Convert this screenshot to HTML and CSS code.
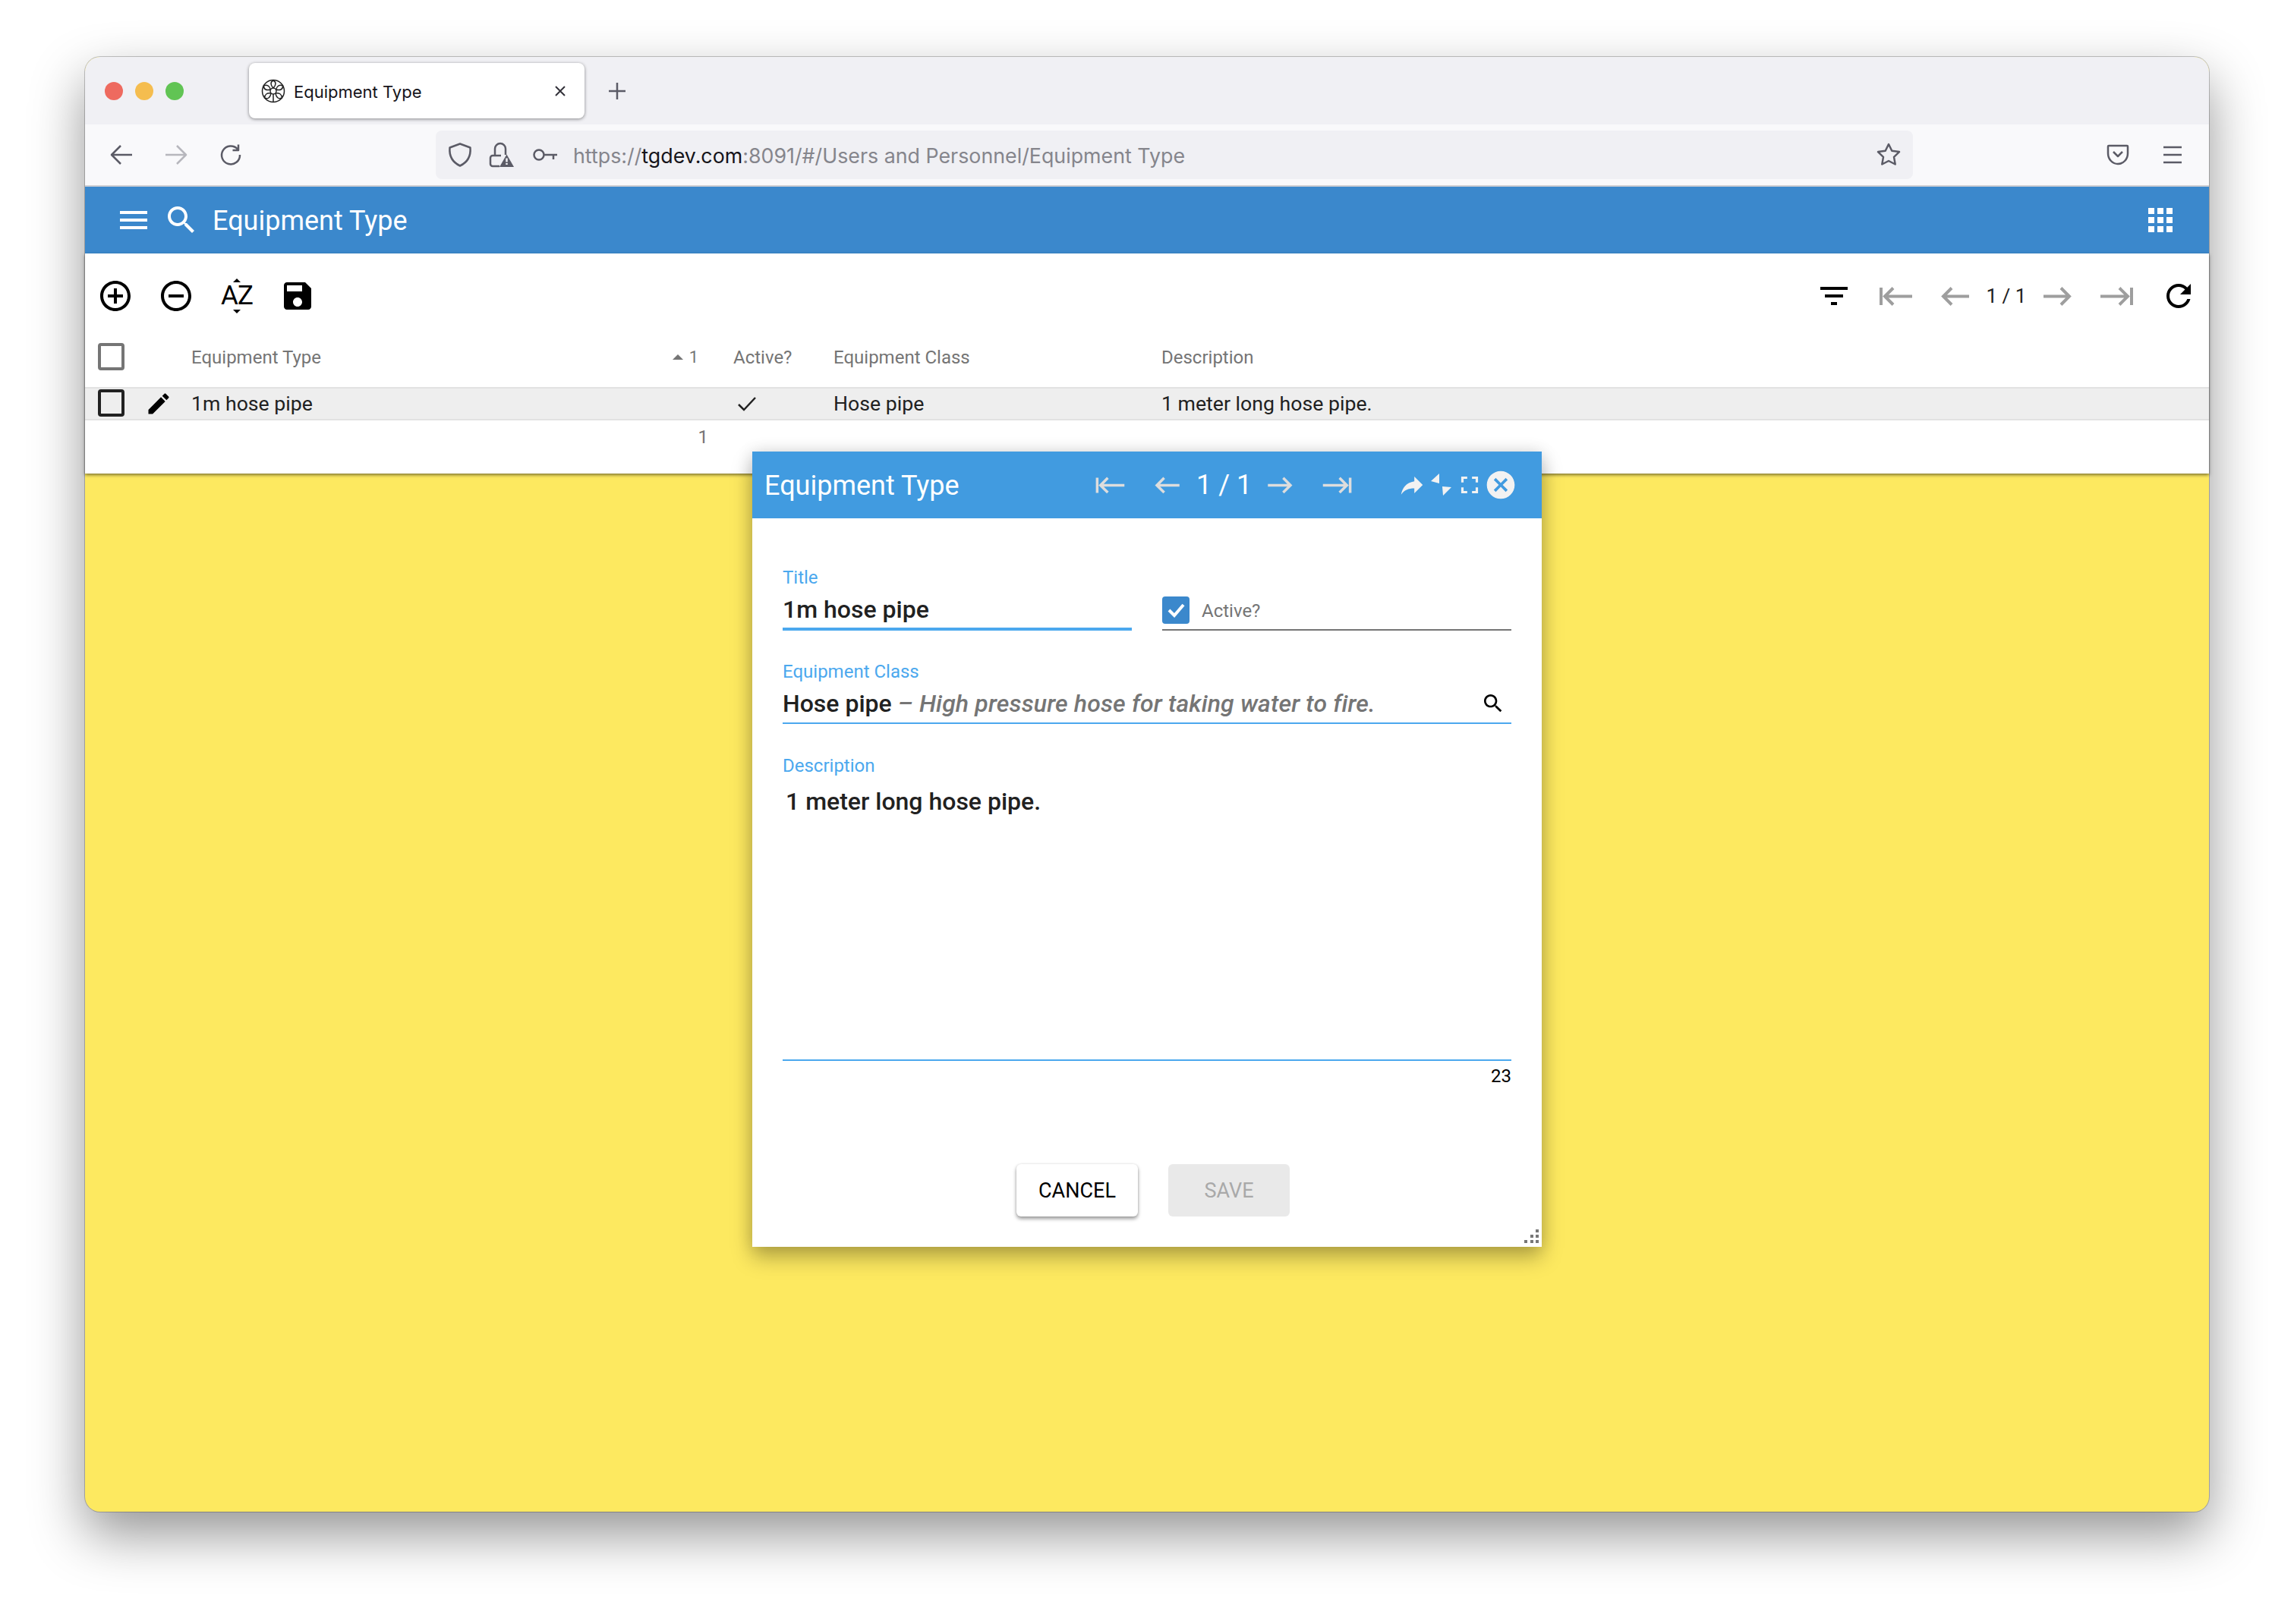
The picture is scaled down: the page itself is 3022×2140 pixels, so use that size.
FILE: index.html
```html
<!DOCTYPE html>
<html lang="en">

<head>
    <meta charset="UTF-8">
    <meta name="viewport" content="width=device-width, initial-scale=1.0">
    <title>Equipment Type</title>
    <link rel="stylesheet" href="styles.css">
</head>

<body>
    <svg class="sprite" aria-hidden="true">
        <symbol id="nav-first" viewBox="0 0 48 32"><path d="M5 5v23M46 16.500H10M21 5.500 10 16.500 21 27.500" /></symbol>
        <symbol id="nav-prev" viewBox="0 0 48 32"><path d="M42 16.500H8M19 5.500 8 16.500 19 27.500" /></symbol>
        <symbol id="nav-next" viewBox="0 0 48 32"><path d="M6 16.500H40M29 5.500 40 16.500 29 27.500" /></symbol>
        <symbol id="nav-last" viewBox="0 0 48 32"><path d="M43 5v23M2 16.500H38M27 5.500 38 16.500 27 27.500" /></symbol>
        <symbol id="search" viewBox="0 0 24 24"><path d="M15.500 14h-.79l-.28-.27C15.410 12.590 16 11.110 16 9.500 16 5.910 13.090 3 9.500 3S3 5.910 3 9.500 5.910 16 9.500 16c1.610 0 3.090-.59 4.230-1.570l.27.28v.79l5 4.990L20.490 19l-4.990-5zm-6 0C7.010 14 5 11.990 5 9.500S7.010 5 9.500 5 14 7.010 14 9.500 11.990 14 9.500 14z" /></symbol>
    </svg>

    <div class="window">
        <div class="tab-strip">
            <div class="lights">
                <span class="light red"></span>
                <span class="light yellow"></span>
                <span class="light green"></span>
            </div>
            <div class="tab">
                <svg class="favicon" viewBox="0 0 32 32">
                    <circle cx="16" cy="16" r="14.500" />
                    <circle cx="16" cy="16" r="4" />
                    <path d="M16 12C12 8 12 4 16 2c4 2 4 6 0 10zM19.500 14c1.500-5 5-7 9-5 .5 4.500-3 6.500-9 5zM19 19c5-1 8 1 8.500 6-4 2-7.500 0-8.500-6zM13 19c-1 6-4.500 8-8.500 6C5 20 8 18 13 19zM12.500 14c-6 1.500-9.500-.5-9-5 4-2 7.500 0 9 5zM16 20v10" />
                </svg>
                <span class="tab-title">Equipment Type</span>
                <svg class="tab-close" viewBox="0 0 20 20"><path d="M4 4l12 12M16 4 4 16" /></svg>
            </div>
            <svg class="new-tab" viewBox="0 0 32 32"><path d="M16 5v22M5 16h22" /></svg>
        </div>

        <div class="nav-bar">
            <svg class="tb-icon" viewBox="0 0 32 32"><path d="M30 16H3M15 4 3 16l12 12" /></svg>
            <svg class="tb-icon disabled" viewBox="0 0 32 32"><path d="M2 16h27M17 4l12 12-12 12" /></svg>
            <svg class="tb-icon" viewBox="0 0 32 32"><path d="M25 8.500A12 12 0 1 0 28 16M26 2.500v7.500h-7.500" /></svg>
            <div class="url-bar">
                <svg class="tb-icon" viewBox="0 0 32 32"><path d="M16 1.500 29.500 6.500c1 11-3 19-13.500 24C5.500 25.500 1.500 17.500 2.500 6.500z" /></svg>
                <svg class="tb-icon lock" viewBox="0 0 32 32">
                    <path d="M8 17V8a7 7 0 0 1 14 0v8M14 31H5a3 3 0 0 1-3-3v-8a3 3 0 0 1 3-3h11" />
                    <path class="solid" d="M23.500 15.500 33 32H14z" />
                    <path class="cutout" d="M23.500 20.500v5M23.500 27v2" />
                </svg>
                <svg class="key" viewBox="0 0 32 32"><circle cx="8" cy="16" r="6.500" /><path d="M15 16h17M27 16v6" /></svg>
                <span class="url"><span class="dim">https://</span>tgdev.com<span class="dim">:8091/#/Users and Personnel/Equipment Type</span></span>
                <svg class="tb-icon star" viewBox="0 0 32 32"><path d="M16 2l4.300 8.700 9.700 1.400-7 6.800 1.700 9.600-8.700-4.500-8.700 4.500 1.700-9.600-7-6.800 9.700-1.400z" /></svg>
            </div>
            <svg class="tb-icon" viewBox="0 0 32 32"><path d="M4 4h24a1 1 0 0 1 1 1v9c0 8-6 14-13 14S3 22 3 14V5a1 1 0 0 1 1-1zM10 12l6 6 6-6" /></svg>
            <svg class="tb-icon" viewBox="0 0 32 32"><path d="M4 6h24M4 16h24M4 26h24" /></svg>
        </div>

        <div class="app-bar">
            <svg class="icon-48" viewBox="0 0 24 24"><path d="M3 18h18v-2H3v2zm0-5h18v-2H3v2zm0-7v2h18V6H3z" /></svg>
            <svg class="icon-48" viewBox="0 0 24 24"><use href="#search" /></svg>
            <h1 class="app-title">Equipment Type</h1>
            <svg class="icon-48" viewBox="0 0 24 24"><path d="M4 8h4V4H4v4zm6 12h4v-4h-4v4zm-6 0h4v-4H4v4zm0-6h4v-4H4v4zm6 0h4v-4h-4v4zm6-10v4h4V4h-4zm-6 4h4V4h-4v4zm6 6h4v-4h-4v4zm0 6h4v-4h-4v4z" /></svg>
        </div>

        <div class="list-panel">
            <div class="toolbar">
                <div class="tool-group">
                    <svg class="icon-48" viewBox="0 0 24 24"><path d="M13 7h-2v4H7v2h4v4h2v-4h4v-2h-4V7zm-1-5C6.480 2 2 6.480 2 12s4.480 10 10 10 10-4.480 10-10S17.520 2 12 2zm0 18c-4.410 0-8-3.590-8-8s3.590-8 8-8 8 3.590 8 8-3.590 8-8 8z" /></svg>
                    <svg class="icon-48" viewBox="0 0 24 24"><path d="M7 11v2h10v-2H7zm5-9C6.480 2 2 6.480 2 12s4.480 10 10 10 10-4.480 10-10S17.520 2 12 2zm0 18c-4.410 0-8-3.590-8-8s3.590-8 8-8 8 3.590 8 8-3.590 8-8 8z" /></svg>
                    <span class="sort-az">AZ<i class="az-up"></i><i class="az-down"></i></span>
                    <svg class="icon-48" viewBox="0 0 24 24"><path d="M17 3H5c-1.110 0-2 .9-2 2v14c0 1.100.89 2 2 2h14c1.100 0 2-.9 2-2V7l-4-4zm-5 16c-1.660 0-3-1.340-3-3s1.340-3 3-3 3 1.340 3 3-1.340 3-3 3zm3-10H5V5h10v4z" /></svg>
                </div>
                <div class="tool-group right">
                    <svg class="icon-48" viewBox="0 0 24 24"><path d="M10 18h4v-2h-4v2zM3 6v2h18V6H3zm3 7h12v-2H6v2z" /></svg>
                    <div class="pager">
                        <svg class="nav-arrow first"><use href="#nav-first" /></svg>
                        <svg class="nav-arrow"><use href="#nav-prev" /></svg>
                        <span class="pager-count">1 / 1</span>
                        <svg class="nav-arrow"><use href="#nav-next" /></svg>
                        <svg class="nav-arrow last"><use href="#nav-last" /></svg>
                    </div>
                    <svg class="icon-48" viewBox="0 0 24 24"><path d="M17.650 6.350C16.200 4.900 14.210 4 12 4c-4.420 0-7.990 3.580-7.990 8s3.570 8 7.990 8c3.730 0 6.840-2.550 7.730-6h-2.080c-.82 2.330-3.040 4-5.650 4-3.310 0-6-2.690-6-6s2.690-6 6-6c1.660 0 3.140.69 4.220 1.780L13 11h7V4l-2.350 2.350z" /></svg>
                </div>
            </div>

            <div class="grid-row grid-head">
                <div class="cell-select"><span class="box"></span></div>
                <div class="cell-type">Equipment Type<span class="sort-mark"><i class="sort-tri"></i>1</span></div>
                <div>Active?</div>
                <div>Equipment Class</div>
                <div>Description</div>
            </div>
            <div class="grid-row grid-data">
                <div class="cell-select">
                    <span class="box"></span>
                    <svg class="edit" viewBox="0 0 24 24"><path d="M3 17.250V21h3.750L17.810 9.940l-3.750-3.750L3 17.250zM20.710 7.040c.39-.39.39-1.020 0-1.410l-2.340-2.340c-.39-.39-1.020-.39-1.410 0l-1.830 1.830 3.750 3.750 1.830-1.830z" /></svg>
                </div>
                <div>1m hose pipe</div>
                <div class="cell-check"><svg viewBox="0 0 26 20"><path d="M2 11l7 7L24 2" /></svg></div>
                <div>Hose pipe</div>
                <div>1 meter long hose pipe.</div>
            </div>
            <div class="grid-row grid-foot">
                <div></div>
                <div class="cell-total">1</div>
            </div>
        </div>

        <div class="workspace"></div>

        <div class="dialog">
            <div class="dialog-head">
                <h2 class="dialog-title">Equipment Type</h2>
                <div class="pager">
                    <svg class="nav-arrow first"><use href="#nav-first" /></svg>
                    <svg class="nav-arrow"><use href="#nav-prev" /></svg>
                    <span class="pager-count">1 / 1</span>
                    <svg class="nav-arrow"><use href="#nav-next" /></svg>
                    <svg class="nav-arrow last"><use href="#nav-last" /></svg>
                </div>
                <div class="dialog-tools">
                    <svg class="icon-38" viewBox="0 0 24 24"><path d="M14 9V5l7 7-7 7v-4.100c-5 0-8.500 1.600-11 5.100 1-5 4-10 11-11z" /></svg>
                    <svg class="icon-32" viewBox="0 0 32 32"><path d="M3 11 14 1v13zM18 18l12 1-11 11z" /></svg>
                    <svg class="icon-38" viewBox="0 0 24 24"><path d="M7 14H5v5h5v-2H7v-3zm-2-4h2V7h3V5H5v5zm12 7h-3v2h5v-5h-2v3zM14 5v2h3v3h2V5h-5z" /></svg>
                    <svg class="icon-close" viewBox="0 0 24 24"><path d="M12 2C6.470 2 2 6.470 2 12s4.470 10 10 10 10-4.470 10-10S17.530 2 12 2zm5 13.590L15.590 17 12 13.410 8.410 17 7 15.590 10.590 12 7 8.410 8.410 7 12 10.590 15.590 7 17 8.410 13.410 12 17 15.590z" /></svg>
                </div>
            </div>

            <div class="dialog-body">
                <div class="field-row">
                    <div class="field">
                        <label class="field-label">Title</label>
                        <div class="field-value title-value">1m hose pipe</div>
                    </div>
                    <div class="field-check">
                        <span class="checkbox"><svg viewBox="0 0 36 36"><path d="M9 18l7 7 12-14" /></svg></span>
                        <span class="check-label">Active?</span>
                    </div>
                </div>

                <div class="field class-field">
                    <label class="field-label">Equipment Class</label>
                    <div class="field-value class-value">
                        <span>Hose pipe <em>– High pressure hose for taking water to fire.</em></span>
                        <svg class="icon-32 lookup" viewBox="0 0 24 24"><use href="#search" /></svg>
                    </div>
                </div>

                <div class="field desc-field">
                    <label class="field-label">Description</label>
                    <div class="desc-text">1 meter long hose pipe.</div>
                    <div class="counter">23</div>
                </div>

                <div class="dialog-actions">
                    <button class="btn">CANCEL</button>
                    <button class="btn btn-off">SAVE</button>
                </div>
            </div>

            <svg class="grip" viewBox="0 0 20 20"><path d="M15 0h4v4h-4zM8 7h4v4H8zM15 7h4v4h-4zM0 14h4v4H0zM8 14h4v4H8zM15 14h4v4h-4z" /></svg>
        </div>
    </div>
</body>

</html>
```

FILE: styles.css
```css
body {
    margin: 0;
    padding: 75px 112px 148px;
    background-color: #ffffff;
    font-family: Roboto, sans-serif;
    color: #212121;
}

.sprite {
    display: none;
}

/* browser window */
.window {
    position: relative;
    display: flex;
    flex-direction: column;
    height: 1917px;
    border-radius: 20px;
    background-color: #fde960;
    box-shadow: 0 0 0 1px rgba(0, 0, 0, 0.22), 0 30px 70px rgba(0, 0, 0, 0.42);
}

.tab-strip {
    display: flex;
    align-items: center;
    height: 89px;
    flex: none;
    border-radius: 20px 20px 0 0;
    background-color: #f0f0f4;
}

.lights {
    display: flex;
    gap: 16px;
    margin-left: 26px;
    margin-right: 86px;
}

.light {
    width: 24px;
    height: 24px;
    border-radius: 50%;
}

.red {
    background-color: #ee6a5f;
}

.yellow {
    background-color: #f5bd4f;
}

.green {
    background-color: #61c454;
}

.tab {
    display: flex;
    align-items: center;
    box-sizing: border-box;
    width: 442px;
    height: 73px;
    padding: 0 22px 0 16px;
    border-radius: 8px;
    background-color: #ffffff;
    box-shadow: 0 1px 4px rgba(0, 0, 0, 0.45);
}

.favicon {
    width: 32px;
    height: 32px;
    fill: none;
    stroke: #222222;
    stroke-width: 1.500;
}

.tab-title {
    flex: 1;
    margin-left: 11px;
    padding-top: 2px;
    font-family: Inter, sans-serif;
    font-size: 22px;
    color: #15141a;
}

.tab-close {
    width: 20px;
    height: 20px;
    fill: none;
    stroke: #33323a;
    stroke-width: 2;
}

.new-tab {
    width: 32px;
    height: 32px;
    margin-left: 27px;
    fill: none;
    stroke: #5b5b66;
    stroke-width: 2.500;
}

.nav-bar {
    display: flex;
    align-items: center;
    gap: 40px;
    height: 80px;
    flex: none;
    padding: 0 32px;
    border-bottom: 2px solid #cfcfd3;
    background-color: #f9f9fb;
}

.tb-icon {
    width: 32px;
    height: 32px;
    flex: none;
    fill: none;
    stroke: #5b5b66;
    stroke-width: 2.500;
    stroke-linejoin: round;
    overflow: visible;
}

.tb-icon.disabled {
    stroke: #b7b7bd;
}

.tb-icon .solid {
    fill: #5b5b66;
    stroke: none;
}

.tb-icon .cutout {
    stroke: #f0f0f4;
}

.url-bar {
    display: flex;
    align-items: center;
    gap: 22px;
    flex: 1;
    height: 64px;
    margin: 0 214px;
    padding: 0 16px;
    border-radius: 8px;
    background-color: #f0f0f4;
}

.key {
    width: 32px;
    height: 32px;
    flex: none;
    margin-left: 4px;
    fill: none;
    stroke: #5b5b66;
    stroke-width: 2.500;
}

.url {
    flex: 1;
    padding-top: 2px;
    margin-left: -1px;
    font-family: Inter, sans-serif;
    font-size: 26.800px;
    color: #15141a;
}

.dim {
    color: #85858c;
}

.app-bar {
    display: flex;
    align-items: center;
    height: 88px;
    flex: none;
    gap: 15px;
    padding: 0 40px;
    background-color: #3b88cc;
    color: #ffffff;
    fill: #ffffff;
}

.app-title {
    flex: 1;
    margin: 2px 0 0 2px;
    font-size: 36px;
    font-weight: 400;
}

.icon-48 {
    width: 48px;
    height: 48px;
    flex: none;
}

.icon-38 {
    width: 38px;
    height: 38px;
    flex: none;
    margin: 0 -3px;
}

.icon-32 {
    width: 32px;
    height: 32px;
    flex: none;
}

/* list */
.list-panel {
    flex: none;
    height: 290px;
    background-color: #ffffff;
    box-shadow: 0 2px 4px rgba(0, 0, 0, 0.5);
}

.toolbar {
    display: flex;
    align-items: center;
    justify-content: space-between;
    height: 112px;
    padding: 0 16px;
}

.tool-group {
    display: flex;
    align-items: center;
    gap: 32px;
}

.tool-group.right {
    gap: 33px;
}

.sort-az {
    position: relative;
    width: 48px;
    font-size: 35px;
    line-height: 48px;
    text-align: center;
    letter-spacing: -1px;
    color: #000000;
}

.az-up,
.az-down {
    position: absolute;
    left: 19px;
    width: 0;
    height: 0;
    border-left: 5px solid transparent;
    border-right: 5px solid transparent;
}

.az-up {
    top: 1px;
    border-bottom: 5px solid #000000;
}

.az-down {
    bottom: 1px;
    border-top: 5px solid #000000;
}

.pager {
    display: flex;
    align-items: center;
    gap: 13px;
}

.nav-arrow {
    width: 48px;
    height: 32px;
    flex: none;
    fill: none;
    stroke: #9e9e9e;
    stroke-width: 4;
}

.nav-arrow.first {
    margin-right: 18px;
}

.nav-arrow.last {
    margin-left: 18px;
}

.pager-count {
    width: 60px;
    font-size: 26px;
    text-align: center;
    white-space: nowrap;
    color: #212121;
}

.grid-row {
    display: grid;
    grid-template-columns: 140px 714px 132px 432px 1fr;
    align-items: center;
}

.grid-head {
    height: 48px;
    padding-bottom: 16px;
    font-size: 24px;
    color: #757575;
}

.grid-head > div:not(.cell-select) {
    padding-top: 1px;
}

.grid-data {
    box-sizing: border-box;
    height: 44px;
    border-top: 2px solid #e2e2e2;
    border-bottom: 2px solid #e2e2e2;
    background-color: #eeeeee;
    font-size: 26.670px;
}

.grid-foot {
    height: 43px;
    font-size: 24px;
    color: #757575;
}

.cell-select {
    position: relative;
    height: 36px;
}

.box {
    position: absolute;
    left: 17px;
    top: 0;
    box-sizing: border-box;
    width: 35px;
    height: 36px;
    border: 4px solid #757575;
    border-radius: 4px;
}

.grid-data .box {
    top: -1px;
    border-color: #212121;
}

.edit {
    position: absolute;
    left: 79px;
    top: 0;
    width: 36px;
    height: 36px;
}

.cell-type {
    display: flex;
    justify-content: space-between;
    padding-right: 46px;
}

.sort-mark {
    display: flex;
    align-items: center;
    gap: 8px;
    font-size: 22px;
}

.sort-tri {
    width: 0;
    height: 0;
    border-left: 7px solid transparent;
    border-right: 7px solid transparent;
    border-bottom: 7px solid #757575;
}

.cell-check svg {
    display: block;
    width: 26px;
    height: 20px;
    margin-left: 5px;
    fill: none;
    stroke: #212121;
    stroke-width: 2.500;
}

.cell-total {
    padding-right: 33px;
    text-align: right;
}

/* dialog */
.dialog {
    position: absolute;
    left: 879px;
    top: 520px;
    display: flex;
    flex-direction: column;
    width: 1040px;
    height: 1048px;
    background-color: #ffffff;
    box-shadow: 0 14px 26px rgba(0, 0, 0, 0.28), 0 0 20px rgba(0, 0, 0, 0.12);
}

.dialog-head {
    display: flex;
    align-items: center;
    height: 88px;
    flex: none;
    padding: 0 32px 0 16px;
    background-color: #419be0;
    color: #ffffff;
    fill: #f2f2f2;
}

.dialog-title {
    flex: 1;
    margin: 2px 0 0;
    font-size: 36px;
    font-weight: 400;
}

.dialog-head .pager {
    gap: 14px;
}

.dialog-head .nav-arrow {
    width: 42px;
    height: 28px;
    margin: 0 3px;
    stroke: #dddddd;
}

.dialog-head .nav-arrow.first {
    margin-right: 17px;
}

.dialog-head .nav-arrow.last {
    margin-left: 17px;
}

.dialog-head .pager-count {
    width: 72px;
    font-size: 36px;
    color: #ffffff;
}

.dialog-tools {
    display: flex;
    align-items: center;
    gap: 6px;
    margin-left: 58px;
}

.icon-close {
    width: 44px;
    height: 44px;
    margin-left: -3px;
}

.dialog-body {
    display: flex;
    flex-direction: column;
    flex: 1;
    padding: 63px 40px 0;
}

.field-row {
    display: grid;
    grid-template-columns: 460px 460px;
    gap: 40px;
    align-items: end;
}

.field-label {
    display: block;
    height: 28px;
    padding-top: 1px;
    font-size: 24px;
    line-height: 28px;
    color: #4ba8ee;
}

.field-value {
    display: flex;
    align-items: center;
    justify-content: space-between;
    height: 40px;
    margin-top: 8px;
    font-size: 32px;
    font-weight: 500;
    line-height: 40px;
}

.title-value {
    padding-bottom: 4px;
    border-bottom: 4px solid #4ba8ee;
}

.field-check {
    display: flex;
    align-items: center;
    gap: 16px;
    height: 44px;
    padding-bottom: 2px;
    border-bottom: 2px solid #757575;
}

.checkbox {
    display: block;
    width: 36px;
    height: 36px;
    margin-top: -2px;
    border-radius: 4px;
    background-color: #3b88cc;
}

.checkbox svg {
    display: block;
    fill: none;
    stroke: #ffffff;
    stroke-width: 4;
}

.check-label {
    margin-top: -1px;
    font-size: 24px;
    color: #757575;
}

.class-field {
    margin-top: 39px;
}

.class-value {
    padding-bottom: 5px;
    border-bottom: 2px solid #4ba8ee;
}

.class-value em {
    letter-spacing: 0.150px;
    color: #757575;
}

.lookup {
    margin-right: 8px;
}

.desc-field {
    margin-top: 40px;
}

.desc-text {
    box-sizing: border-box;
    height: 375px;
    padding: 13px 4px 0;
    border-bottom: 2px solid #4ba8ee;
    font-size: 32px;
    font-weight: 500;
    line-height: 40px;
}

.counter {
    margin-top: 6px;
    font-size: 24px;
    line-height: 28px;
    text-align: right;
    color: #000000;
}

.dialog-actions {
    display: flex;
    justify-content: center;
    gap: 40px;
    margin-top: 102px;
    padding-left: 16px;
}

.btn {
    width: 160px;
    height: 69px;
    border: none;
    border-radius: 6px;
    background-color: #ffffff;
    box-shadow: 0 3px 5px rgba(0, 0, 0, 0.4), 0 0 3px rgba(0, 0, 0, 0.1);
    font-family: Roboto, sans-serif;
    font-size: 27px;
    font-weight: 400;
    color: #000000;
}

.btn-off {
    background-color: #e9e9e9;
    box-shadow: none;
    color: #a9a9a9;
}

.grip {
    position: absolute;
    right: 3px;
    bottom: 3px;
    width: 20px;
    height: 20px;
    fill: #777777;
}
```
